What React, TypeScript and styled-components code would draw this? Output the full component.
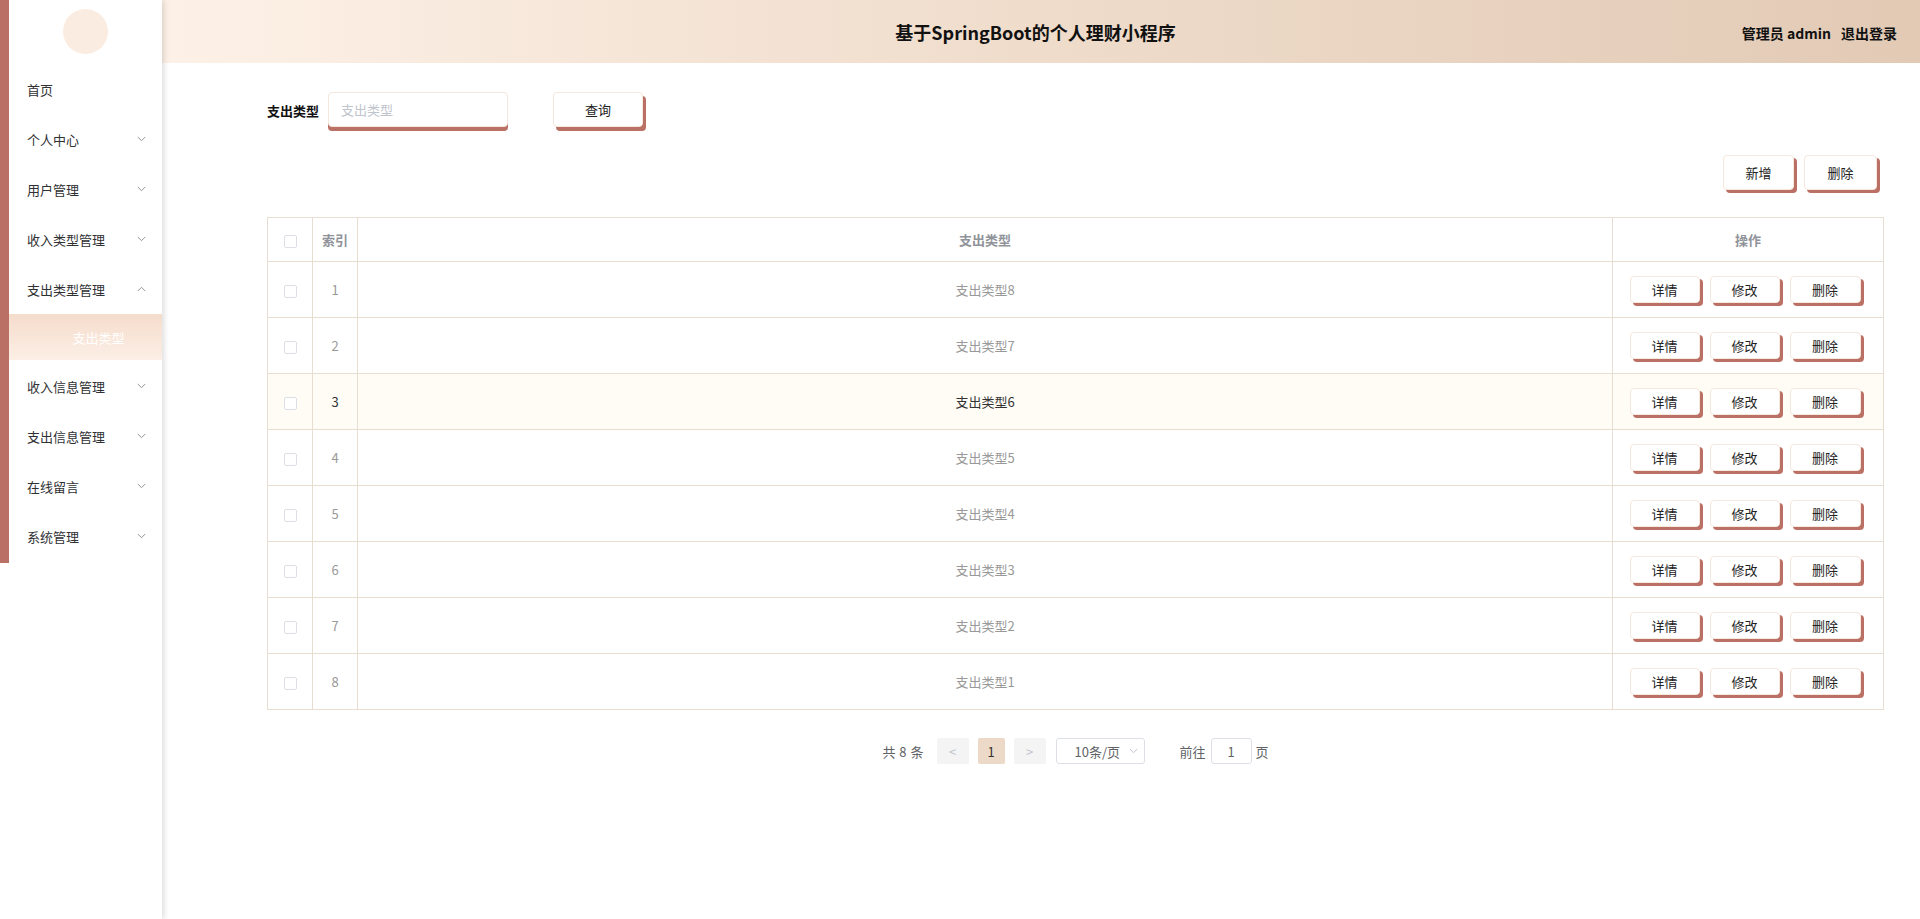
import React from "react";
import styled, { createGlobalStyle } from "styled-components";

const RED = "#bb7066";
const LINE = "#e7ddd1";
const FONT = `"Noto Sans CJK SC", "Noto Sans", sans-serif`;

const GlobalStyle = createGlobalStyle`
  html, body {
    margin: 0;
    padding: 0;
    height: 100%;
    overflow: hidden;
    background: #fff;
    font-family: ${FONT};
  }
  * { box-sizing: border-box; }
`;

const StyledLayout = styled.div`
  display: flex;
  height: 919px;
`;

const StyledSidebar = styled.aside`
  position: relative;
  z-index: 2;
  width: 162px;
  flex-shrink: 0;
  background: #fff;
  box-shadow: 2px 0 6px rgba(0, 0, 0, 0.14);
`;

const StyledMenu = styled.nav`
  border-left: 9px solid ${RED};
  padding-bottom: 2px;
`;

const StyledAvatarBox = styled.div`
  height: 64px;
  display: flex;
  justify-content: center;
  padding-top: 9px;
`;

const StyledAvatar = styled.div`
  width: 45px;
  height: 45px;
  border-radius: 50%;
  background: #fbece1;
`;

const StyledMenuItem = styled.div`
  height: 50px;
  display: flex;
  align-items: center;
  justify-content: space-between;
  padding: 0 16px 0 18px;
  font-size: 13px;
  color: #303133;
  cursor: pointer;
`;

const StyledSubItem = styled.div`
  height: 46px;
  margin-bottom: 1px;
  display: flex;
  align-items: center;
  justify-content: center;
  padding-left: 26px;
  font-size: 13px;
  color: #fff;
  background: linear-gradient(180deg, #f5dccb 0%, #fcefe6 100%);
`;

const StyledMain = styled.main`
  flex: 1;
  display: flex;
  flex-direction: column;
  min-width: 0;
`;

const StyledHeader = styled.header`
  height: 63px;
  flex-shrink: 0;
  display: grid;
  grid-template-columns: 1fr auto 1fr;
  align-items: center;
  padding: 0 23px 0 12px;
  background: linear-gradient(90deg, #fdf1e7 0%, #efdccb 50%, #e2cab5 100%);
`;

const StyledTitle = styled.h1`
  grid-column: 2;
  margin: 0;
  font-size: 18px;
  font-weight: 700;
  color: #111;
`;

const StyledUser = styled.div`
  justify-self: end;
  display: flex;
  gap: 10px;
  font-size: 14px;
  font-weight: 700;
  color: #111;
  padding-top: 2px;
`;

const StyledContent = styled.section`
  padding: 29px 36px 0 105px;
`;

const StyledSearchRow = styled.div`
  display: flex;
  align-items: center;
  height: 39px;
`;

const StyledLabel = styled.label`
  font-size: 13px;
  font-weight: 700;
  color: #111;
  margin-right: 9px;
  padding-bottom: 3px;
`;

const StyledInput = styled.input`
  width: 180px;
  height: 35px;
  margin-bottom: 4px;
  padding: 0 12px;
  border: 1px solid #f4e7dc;
  border-radius: 4px;
  box-shadow: 0 4px 0 ${RED};
  font-family: ${FONT};
  font-size: 13px;
  outline: none;
  &::placeholder { color: #c0c4cc; }
`;

const StyledButton = styled.button<{ $w: number; $h: number }>`
  width: ${(p) => p.$w}px;
  height: ${(p) => p.$h}px;
  padding: 0;
  border: 1px solid #f6e8dc;
  border-radius: 4px;
  background: #fff;
  box-shadow: 3px 3px 0 ${RED};
  font-family: ${FONT};
  font-size: 13px;
  color: #222;
  cursor: pointer;
`;

const StyledQuery = styled(StyledButton)`
  margin-left: 45px;
  margin-bottom: 4px;
  box-shadow: 3px 4px 0 ${RED};
`;

const StyledToolRow = styled.div`
  display: flex;
  justify-content: flex-end;
  gap: 10px;
  margin-top: 24px;
  padding-right: 7px;
`;

const StyledTable = styled.table`
  width: 100%;
  margin-top: 27px;
  border-collapse: collapse;
  table-layout: fixed;
  font-size: 13px;
  border: 1px solid ${LINE};
`;

const StyledTh = styled.th<{ $w?: number }>`
  width: ${(p) => (p.$w ? `${p.$w}px` : "auto")};
  height: 44px;
  padding: 0;
  border: 1px solid ${LINE};
  font-weight: 700;
  color: #909399;
  text-align: center;
`;

const StyledRow = styled.tr<{ $hover?: boolean }>`
  background: ${(p) => (p.$hover ? "#fffcf6" : "#fff")};
  color: ${(p) => (p.$hover ? "#333" : "#999")};
`;

const StyledTd = styled.td`
  height: 56px;
  padding: 0;
  border: 1px solid ${LINE};
  text-align: center;
`;

const StyledActions = styled.div`
  display: flex;
  justify-content: center;
  gap: 10px;
  padding-right: 6px;
`;

const StyledCheck = styled.span`
  display: inline-block;
  width: 13px;
  height: 13px;
  border: 1px solid #dcdfe6;
  border-radius: 2px;
  background: #fff;
  vertical-align: middle;
`;

const StyledPager = styled.div`
  display: flex;
  justify-content: center;
  align-items: center;
  margin-top: 28px;
  font-size: 13px;
  color: #606266;
`;

const StyledTotal = styled.span`
  margin-right: 13px;
  word-spacing: 1px;
`;

const StyledPageBtn = styled.span<{ $active?: boolean; $w: number }>`
  width: ${(p) => p.$w}px;
  height: 26px;
  margin-right: 9px;
  display: flex;
  align-items: center;
  justify-content: center;
  border-radius: 2px;
  background: ${(p) => (p.$active ? "#ecd9c8" : "#f4f4f5")};
  color: ${(p) => (p.$active ? "#333" : "#c0c4cc")};
  font-size: 13px;
`;

const StyledSelect = styled.div`
  width: 89px;
  height: 26px;
  margin-left: 1px;
  margin-right: 35px;
  display: flex;
  align-items: center;
  justify-content: space-between;
  padding: 0 6px 0 18px;
  border: 1px solid #dcdfe6;
  border-radius: 3px;
  color: #606266;
`;

const StyledJumpInput = styled.span`
  width: 41px;
  height: 26px;
  margin: 0 4px 0 5px;
  display: flex;
  align-items: center;
  justify-content: center;
  border: 1px solid #dcdfe6;
  border-radius: 3px;
  color: #606266;
`;

function Chevron({ up, color = "#909399" }: { up?: boolean; color?: string }) {
  return (
    <svg width="9" height="6" viewBox="0 0 9 6" fill="none">
      <path
        d={up ? "M0.8 5L4.5 1.3L8.2 5" : "M0.8 1L4.5 4.7L8.2 1"}
        stroke={color}
        strokeWidth="1"
      />
    </svg>
  );
}

const menus = [
  { name: "首页", arrow: false },
  { name: "个人中心", arrow: true },
  { name: "用户管理", arrow: true },
  { name: "收入类型管理", arrow: true },
  { name: "支出类型管理", arrow: true, open: true, children: ["支出类型"] },
  { name: "收入信息管理", arrow: true },
  { name: "支出信息管理", arrow: true },
  { name: "在线留言", arrow: true },
  { name: "系统管理", arrow: true },
];

const rows = [8, 7, 6, 5, 4, 3, 2, 1].map((n, i) => ({
  index: i + 1,
  type: `支出类型${n}`,
}));

export default function App() {
  return (
    <>
      <GlobalStyle />
      <StyledLayout>
        <StyledSidebar>
          <StyledMenu>
            <StyledAvatarBox>
              <StyledAvatar />
            </StyledAvatarBox>
            {menus.map((m) => (
              <React.Fragment key={m.name}>
                <StyledMenuItem>
                  {m.name}
                  {m.arrow && <Chevron up={m.open} />}
                </StyledMenuItem>
                {m.open &&
                  m.children?.map((c) => <StyledSubItem key={c}>{c}</StyledSubItem>)}
              </React.Fragment>
            ))}
          </StyledMenu>
        </StyledSidebar>

        <StyledMain>
          <StyledHeader>
            <StyledTitle>基于SpringBoot的个人理财小程序</StyledTitle>
            <StyledUser>
              <span>管理员 admin</span>
              <span>退出登录</span>
            </StyledUser>
          </StyledHeader>

          <StyledContent>
            <StyledSearchRow>
              <StyledLabel>支出类型</StyledLabel>
              <StyledInput placeholder="支出类型" />
              <StyledQuery $w={90} $h={35}>
                查询
              </StyledQuery>
            </StyledSearchRow>

            <StyledToolRow>
              <StyledButton $w={71} $h={35}>新增</StyledButton>
              <StyledButton $w={73} $h={35}>删除</StyledButton>
            </StyledToolRow>

            <StyledTable>
              <thead>
                <tr>
                  <StyledTh $w={45}>
                    <StyledCheck />
                  </StyledTh>
                  <StyledTh $w={45}>索引</StyledTh>
                  <StyledTh>支出类型</StyledTh>
                  <StyledTh $w={271}>操作</StyledTh>
                </tr>
              </thead>
              <tbody>
                {rows.map((r) => (
                  <StyledRow key={r.index} $hover={r.index === 3}>
                    <StyledTd>
                      <StyledCheck />
                    </StyledTd>
                    <StyledTd>{r.index}</StyledTd>
                    <StyledTd>{r.type}</StyledTd>
                    <StyledTd>
                      <StyledActions>
                        <StyledButton $w={70} $h={27}>详情</StyledButton>
                        <StyledButton $w={70} $h={27}>修改</StyledButton>
                        <StyledButton $w={71} $h={27}>删除</StyledButton>
                      </StyledActions>
                    </StyledTd>
                  </StyledRow>
                ))}
              </tbody>
            </StyledTable>

            <StyledPager>
              <StyledTotal>共 8 条</StyledTotal>
              <StyledPageBtn $w={32}>&lt;</StyledPageBtn>
              <StyledPageBtn $w={27} $active>1</StyledPageBtn>
              <StyledPageBtn $w={32}>&gt;</StyledPageBtn>
              <StyledSelect>
                10条/页
                <Chevron color="#c0c4cc" />
              </StyledSelect>
              前往
              <StyledJumpInput>1</StyledJumpInput>
              页
            </StyledPager>
          </StyledContent>
        </StyledMain>
      </StyledLayout>
    </>
  );
}
